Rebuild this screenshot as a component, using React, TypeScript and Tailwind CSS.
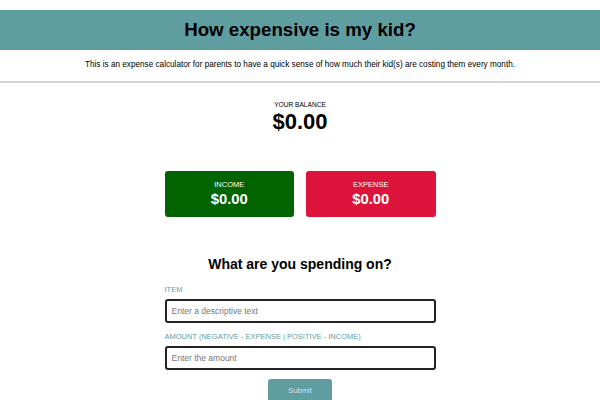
export default function App() {
  return (
    <div className="min-h-screen bg-white pt-[10px] text-black" style={{ fontFamily: '"Liberation Sans", Arial, sans-serif' }}>
      {/* Header */}
      <header className="flex h-[40px] items-center justify-center bg-[#5f9ea0]">
        <h1 className="text-[18.7px] font-bold leading-none">How expensive is my kid?</h1>
      </header>
      <p className="flex h-[31px] items-center justify-center text-[8.2px]">
        This is an expense calculator for parents to have a quick sense of how much their kid(s) are costing them every month.
      </p>
      <div className="border-t-2 border-[#d4d4d4]" />

      <main className="mx-auto w-[271px]">
        {/* Balance */}
        <div className="mt-[18px] flex flex-col items-center">
          <h4 className="text-[6.6px] leading-[8px]">YOUR BALANCE</h4>
          <h2 className="text-[22px] font-bold leading-[26px]">$0.00</h2>
        </div>

        {/* Income / Expense */}
        <div className="mt-[36px] grid grid-cols-2 gap-[12px]">
          <div className="flex h-[46px] flex-col items-center justify-center rounded-[3px] bg-[#006400] text-white">
            <span className="text-[7.5px] leading-[10px]">INCOME</span>
            <span className="text-[14.8px] font-bold leading-[18px]">$0.00</span>
          </div>
          <div className="flex h-[46px] flex-col items-center justify-center rounded-[3px] bg-[#dc143c] text-white">
            <span className="text-[7.5px] leading-[10px]">EXPENSE</span>
            <span className="text-[14.8px] font-bold leading-[18px]">$0.00</span>
          </div>
        </div>

        {/* Form */}
        <h3 className="mt-[38px] text-center text-[14px] font-bold leading-[18px]">What are you spending on?</h3>
        <form className="mt-[12px] flex flex-col">
          <label className="text-[7.5px] leading-[10px] text-[#5f9ea0]">ITEM</label>
          <input
            className="mt-[4px] h-[24px] rounded-[3px] border-2 border-[#222] px-[5px] text-[8.5px] placeholder:text-[#777] outline-none"
            placeholder="Enter a descriptive text"
          />
          <label className="mt-[9px] text-[7.5px] leading-[10px] text-[#5f9ea0]">AMOUNT (NEGATIVE - EXPENSE | POSITIVE - INCOME)</label>
          <input
            className="mt-[4px] h-[24px] rounded-[3px] border-2 border-[#222] px-[5px] text-[8.5px] placeholder:text-[#777] outline-none"
            placeholder="Enter the amount"
          />
          <button
            type="button"
            className="mx-auto mt-[9px] h-[24px] w-[64px] rounded-[3px] bg-[#5f9ea0] text-[7.7px] text-[#dde]"
          >
            Submit
          </button>
        </form>
      </main>
    </div>
  )
}
